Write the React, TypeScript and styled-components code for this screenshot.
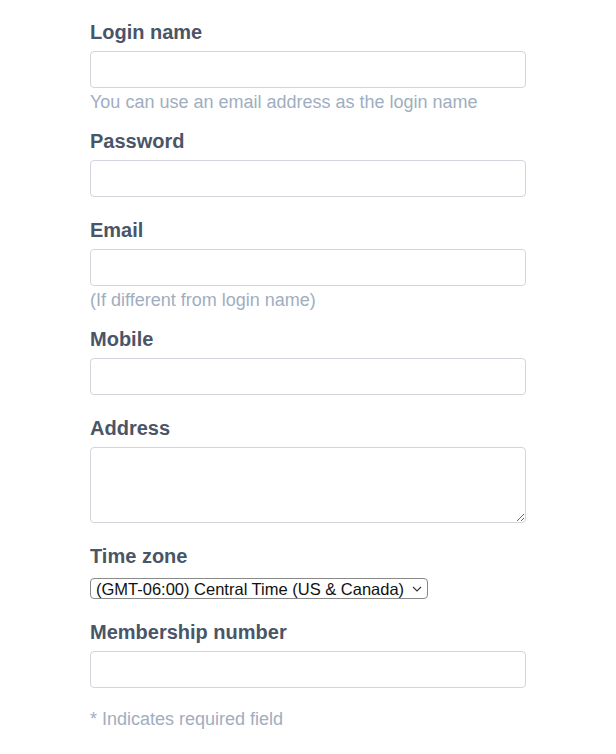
import styled, { createGlobalStyle } from "styled-components"

const GlobalStyle = createGlobalStyle`
  body {
    margin: 0;
    background: #ffffff;
    font-family: "Liberation Sans", Arial, sans-serif;
  }
`

interface FieldProps {
  label: string
  hint?: string
  multiline?: boolean
  type?: string
}

const Field = ({ label, hint, multiline, type = "text" }: FieldProps) => {
  return (
    <Group $hasHint={!!hint}>
      <Label>{label}</Label>
      {multiline ? <TextArea rows={3} /> : <Input type={type} />}
      {hint && <Hint>{hint}</Hint>}
    </Group>
  )
}

const App = () => {
  return (
    <>
      <GlobalStyle />
      <Form>
        <Field label="Login name" hint="You can use an email address as the login name" />
        <Field label="Password" type="password" />
        <Field label="Email" hint="(If different from login name)" />
        <Field label="Mobile" />
        <Field label="Address" multiline />
        <Group $hasHint={false}>
          <Label>Time zone</Label>
          <SelectWrap>
            <Select defaultValue="central">
              <option value="central">(GMT-06:00) Central Time (US &amp; Canada)</option>
            </Select>
            <Chevron viewBox="0 0 10 6" aria-hidden="true">
              <path d="M1 1l4 4 4-4" fill="none" stroke="#333" strokeWidth="1.1" />
            </Chevron>
          </SelectWrap>
        </Group>
        <Field label="Membership number" />
        <Footnote>* Indicates required field</Footnote>
      </Form>
    </>
  )
}

export default App

const Form = styled.form`
  display: flex;
  flex-direction: column;
  width: 436px;
  padding: 20px 90px 24px;
`

const Group = styled.div<{ $hasHint: boolean }>`
  display: flex;
  flex-direction: column;
  margin-bottom: ${(p) => (p.$hasHint ? "16px" : "21px")};
`

const Label = styled.label`
  font-size: 20px;
  line-height: 24px;
  font-weight: 700;
  color: #4a5568;
  margin-bottom: 7px;
`

const Input = styled.input`
  box-sizing: border-box;
  width: 100%;
  height: 37px;
  border: 1px solid #d2d6dc;
  border-radius: 4px;
  padding: 0 10px;
  font-size: 16px;
  font-family: inherit;
  background: #fff;
`

const TextArea = styled.textarea`
  box-sizing: border-box;
  width: 100%;
  height: 76px;
  border: 1px solid #d2d6dc;
  border-radius: 4px;
  padding: 8px 10px;
  font-size: 16px;
  font-family: inherit;
  background: #fff;
`

const Hint = styled.div`
  margin-top: 3px;
  font-size: 18px;
  line-height: 22px;
  color: #a0aec0;
`

const SelectWrap = styled.div`
  position: relative;
  align-self: flex-start;
  margin-top: 3px;
`

const Select = styled.select`
  appearance: none;
  -webkit-appearance: none;
  box-sizing: border-box;
  height: 21px;
  padding: 0 22px 0 5px;
  border: 1px solid #8a8a8a;
  border-radius: 4px;
  background: #fff;
  color: #111;
  font-size: 16.5px;
  font-family: "Liberation Sans", Arial, sans-serif;
`

const Chevron = styled.svg`
  position: absolute;
  right: 6px;
  top: 8px;
  width: 10px;
  height: 6px;
  pointer-events: none;
`

const Footnote = styled.p`
  margin: 0;
  font-size: 18px;
  line-height: 20px;
  color: #a0aec0;
`
